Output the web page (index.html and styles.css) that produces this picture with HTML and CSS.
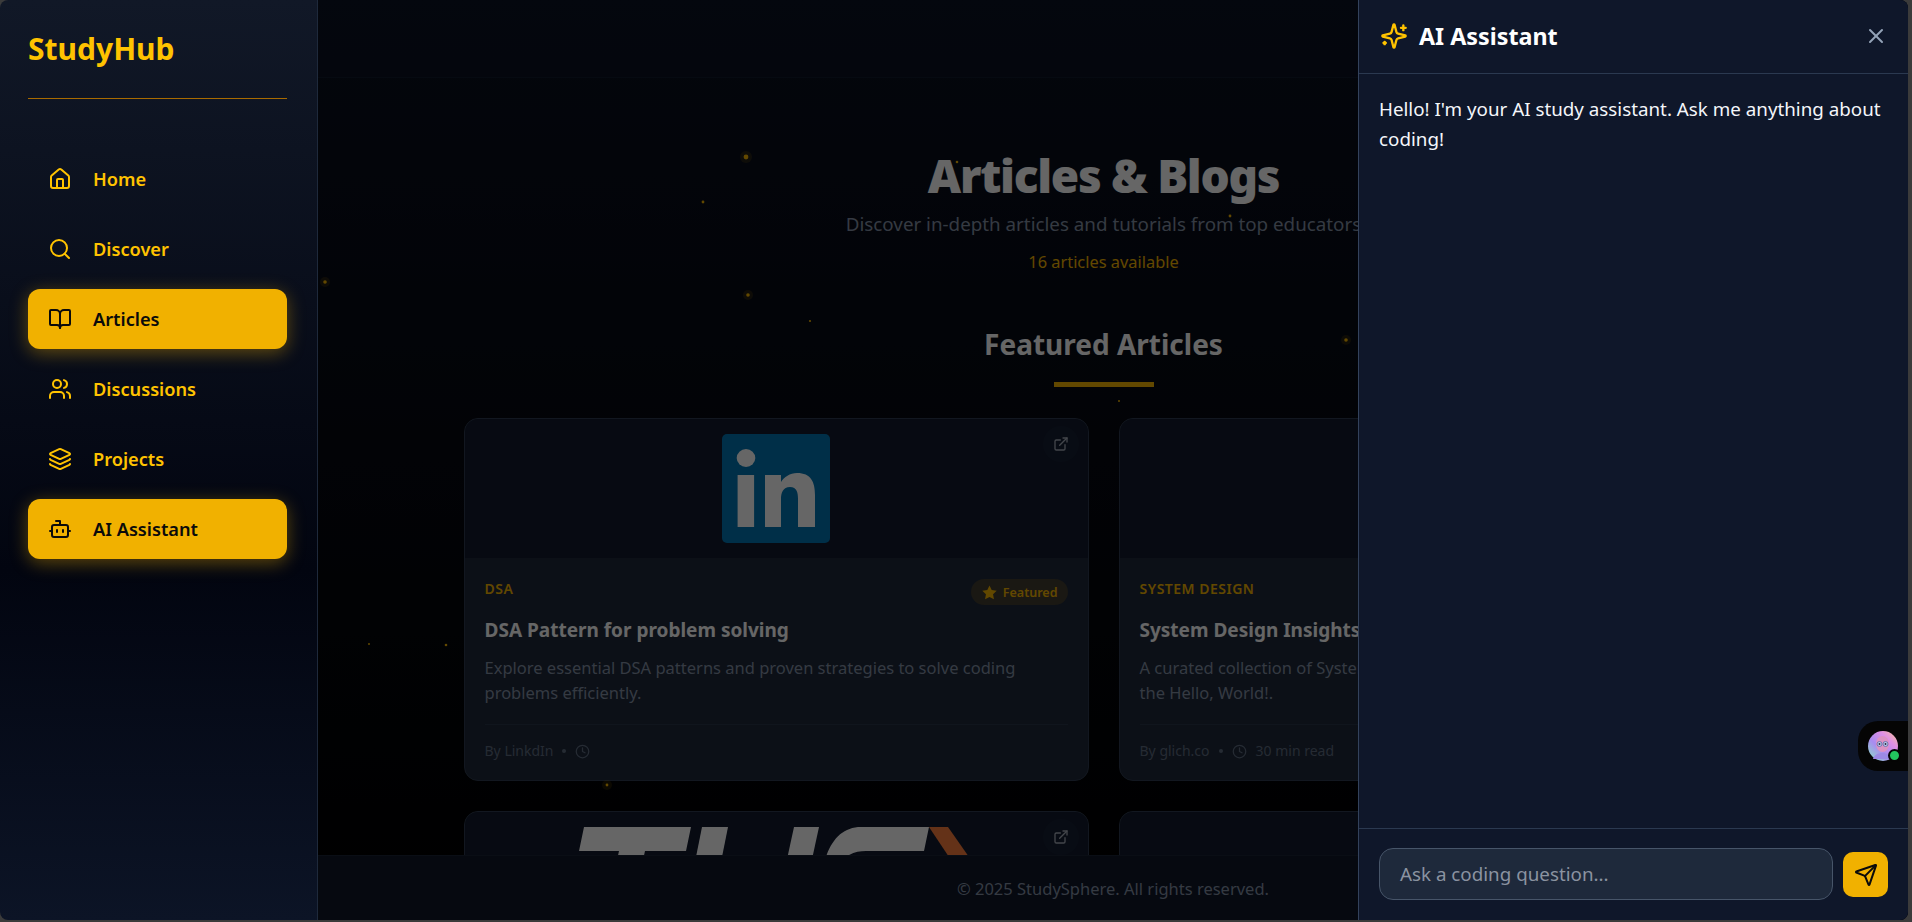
FILE: index.html
```html
<!DOCTYPE html>
<html lang="en">
<head>
<meta charset="utf-8">
<title>StudyHub - Articles</title>
<link rel="stylesheet" href="styles.css">
</head>
<body>
<div class="frame">
  <aside class="sidebar">
    <div class="brand">StudyHub</div>
    <nav class="nav">
      <a class="nav-item"><svg class="icon" viewBox="0 0 24 24"><path d="M15 21v-8a1 1 0 0 0-1-1h-4a1 1 0 0 0-1 1v8"/><path d="M3 10a2 2 0 0 1 .709-1.528l7-5.999a2 2 0 0 1 2.582 0l7 5.999A2 2 0 0 1 21 10v9a2 2 0 0 1-2 2H5a2 2 0 0 1-2-2z"/></svg><span>Home</span></a>
      <a class="nav-item"><svg class="icon" viewBox="0 0 24 24"><circle cx="11" cy="11" r="8"/><path d="m21 21-4.3-4.3"/></svg><span>Discover</span></a>
      <a class="nav-item active"><svg class="icon" viewBox="0 0 24 24"><path d="M12 7v14"/><path d="M3 18a1 1 0 0 1-1-1V4a1 1 0 0 1 1-1h5a4 4 0 0 1 4 4 4 4 0 0 1 4-4h5a1 1 0 0 1 1 1v13a1 1 0 0 1-1 1h-6a3 3 0 0 0-3 3 3 3 0 0 0-3-3z"/></svg><span>Articles</span></a>
      <a class="nav-item"><svg class="icon" viewBox="0 0 24 24"><path d="M16 21v-2a4 4 0 0 0-4-4H6a4 4 0 0 0-4 4v2"/><circle cx="9" cy="7" r="4"/><path d="M22 21v-2a4 4 0 0 0-3-3.87"/><path d="M16 3.13a4 4 0 0 1 0 7.75"/></svg><span>Discussions</span></a>
      <a class="nav-item"><svg class="icon" viewBox="0 0 24 24"><path d="M12.83 2.18a2 2 0 0 0-1.66 0L2.6 6.08a1 1 0 0 0 0 1.83l8.58 3.91a2 2 0 0 0 1.66 0l8.58-3.9a1 1 0 0 0 0-1.83z"/><path d="M2 12a1 1 0 0 0 .58.91l8.6 3.91a2 2 0 0 0 1.65 0l8.58-3.9A1 1 0 0 0 22 12"/><path d="M2 17a1 1 0 0 0 .58.91l8.6 3.91a2 2 0 0 0 1.65 0l8.58-3.9A1 1 0 0 0 22 17"/></svg><span>Projects</span></a>
      <a class="nav-item active"><svg class="icon" viewBox="0 0 24 24"><path d="M12 8V4H8"/><rect x="4" y="8" width="16" height="12" rx="2"/><path d="M2 14h2"/><path d="M20 14h2"/><path d="M15 13v2"/><path d="M9 13v2"/></svg><span>AI Assistant</span></a>
    </nav>
  </aside>

  <div class="main">
    <header class="topbar"></header>
    <main class="content">
      <svg class="particles" viewBox="0 0 1589 777" aria-hidden="true">
        <g class="glow">
          <circle cx="427" cy="79" r="6"/><circle cx="6" cy="204" r="5"/><circle cx="429" cy="217" r="5"/><circle cx="1027" cy="262" r="5"/><circle cx="288" cy="707" r="5"/>
        </g>
        <g class="dots">
          <circle cx="427" cy="79" r="2.4"/><circle cx="384" cy="124" r="1.4"/><circle cx="6" cy="204" r="1.8"/><circle cx="429" cy="217" r="1.8"/><circle cx="491" cy="243" r="1.1"/><circle cx="50" cy="566" r="1"/><circle cx="127" cy="567" r="1.3"/><circle cx="288" cy="707" r="1.4"/><circle cx="638" cy="84" r="1.3"/><circle cx="911" cy="138" r="1.4"/><circle cx="1027" cy="262" r="1.8"/><circle cx="800" cy="323" r="1"/>
        </g>
      </svg>
      <section class="hero">
        <h1 class="hero-title">Articles &amp; Blogs</h1>
        <p class="hero-sub">Discover in-depth articles and tutorials from top educators</p>
        <p class="hero-count">16 articles available</p>
      </section>
      <section class="featured">
        <h2 class="section-title">Featured Articles</h2>
        <div class="section-bar"></div>
        <div class="grid">
          <article class="card">
            <div class="card-media">
              <svg class="logo-in" viewBox="0 0 108 109"><rect width="108" height="109" rx="5" class="in-bg"/><ellipse cx="24" cy="24" rx="9.300" ry="9" class="in-fg"/><rect x="15.600" y="41" width="16.500" height="52" class="in-fg"/><path class="in-fg" d="M43 41h16v7c3-5 9-9 16-9 14 0 18 9 18 22v32H76V65c0-6-1-12-8-12s-9 6-9 12v28H43z"/></svg>
              <span class="ext"><svg class="icon-sm" viewBox="0 0 24 24"><path d="M15 3h6v6"/><path d="M10 14 21 3"/><path d="M18 13v6a2 2 0 0 1-2 2H5a2 2 0 0 1-2-2V8a2 2 0 0 1 2-2h6"/></svg></span>
            </div>
            <div class="card-body">
              <div class="card-top">
                <span class="cat">DSA</span>
                <span class="pill"><svg class="star" viewBox="0 0 24 24"><path d="M12 2l3.1 6.6 7.1.9-5.2 5 1.3 7.2L12 18.2l-6.3 3.5L7 14.5l-5.200-5 7.100-.9z"/></svg>Featured</span>
              </div>
              <h3 class="card-title">DSA Pattern for problem solving</h3>
              <p class="card-desc">Explore essential DSA patterns and proven strategies to solve coding problems efficiently.</p>
              <div class="card-meta"><span>By LinkdIn</span><span class="sep"></span><svg class="clock" viewBox="0 0 24 24"><circle cx="12" cy="12" r="10"/><polyline points="12 6 12 12 16 14"/></svg></div>
            </div>
          </article>
          <article class="card">
            <div class="card-media"></div>
            <div class="card-body">
              <div class="card-top"><span class="cat">System Design</span></div>
              <h3 class="card-title">System Design Insights</h3>
              <p class="card-desc">A curated collection of System Design articles, guides and newsletters from the Hello, World!.</p>
              <div class="card-meta"><span>By glich.co</span><span class="sep"></span><svg class="clock" viewBox="0 0 24 24"><circle cx="12" cy="12" r="10"/><polyline points="12 6 12 12 16 14"/></svg><span>30 min read</span></div>
            </div>
          </article>
          <article class="card">
            <div class="card-media">
              <svg class="logo-tuf" viewBox="0 0 430 60"><path class="tuf-fg" d="M23 0H130L125 24H84L76 60H50L58 24H18Z"/><path class="tuf-fg" d="M141 0H167L155 60H129Z"/><path class="tuf-fg" d="M233 0H258L245 60H220Z"/><path class="tuf-fg" d="M300 0H368L363 24H305C298 24 292 25 285 30L262 40C268 15 280 0 300 0Z"/><path class="tuf-or" d="M368 0H387L429 60H408Z"/></svg>
              <span class="ext"><svg class="icon-sm" viewBox="0 0 24 24"><path d="M15 3h6v6"/><path d="M10 14 21 3"/><path d="M18 13v6a2 2 0 0 1-2 2H5a2 2 0 0 1-2-2V8a2 2 0 0 1 2-2h6"/></svg></span>
            </div>
          </article>
          <article class="card">
            <div class="card-media"></div>
          </article>
        </div>
      </section>
    </main>
    <footer class="footer">© 2025 StudySphere. All rights reserved.</footer>
    <div class="dim"></div>
  </div>

  <aside class="panel">
    <div class="panel-head">
      <svg class="spark" viewBox="0 0 24 24"><path d="M9.937 15.5A2 2 0 0 0 8.5 14.063l-6.135-1.582a.5.5 0 0 1 0-.962L8.5 9.936A2 2 0 0 0 9.937 8.5l1.582-6.135a.5.5 0 0 1 .963 0L14.063 8.5A2 2 0 0 0 15.5 9.937l6.135 1.581a.5.5 0 0 1 0 .964L15.5 14.063a2 2 0 0 0-1.437 1.437l-1.582 6.135a.5.5 0 0 1-.963 0z"/><path d="M20 3v4"/><path d="M22 5h-4"/><path d="M4 17v2"/><path d="M5 18H3"/></svg>
      <h2 class="panel-title">AI Assistant</h2>
      <svg class="close" viewBox="0 0 24 24"><path d="M18 6 6 18"/><path d="m6 6 12 12"/></svg>
    </div>
    <div class="panel-body">
      <p class="msg">Hello! I'm your AI study assistant. Ask me anything about coding!</p>
    </div>
    <div class="panel-input">
      <div class="input">Ask a coding question...</div>
      <button class="send" type="button"><svg class="send-icon" viewBox="0 0 24 24"><path d="M14.536 21.686a.5.5 0 0 0 .937-.024l6.5-19a.496.496 0 0 0-.635-.635l-19 6.5a.5.5 0 0 0-.024.937l7.93 3.18a2 2 0 0 1 1.112 1.11z"/><path d="m21.854 2.147-10.94 10.939"/></svg></button>
    </div>
    <div class="widget">
      <span class="avatar">
        <svg viewBox="0 0 30 30"><defs><linearGradient id="av" x1="0" y1="1" x2="1" y2="0"><stop offset="0" stop-color="#86e6c4"/><stop offset=".4" stop-color="#a98cf0"/><stop offset=".7" stop-color="#e08fe6"/><stop offset="1" stop-color="#f9c68e"/></linearGradient></defs><circle cx="15" cy="15" r="15" fill="url(#av)"/><ellipse cx="14.500" cy="13" rx="6.500" ry="8" fill="#dc92c4"/><circle cx="11.500" cy="13" r="2.500" fill="#b9c4e8" stroke="#5f68a8" stroke-width=".8"/><circle cx="17.500" cy="13" r="2.500" fill="#b9c4e8" stroke="#5f68a8" stroke-width=".8"/><circle cx="11.500" cy="13" r=".9" fill="#2b2b3a"/><circle cx="17.500" cy="13" r=".9" fill="#2b2b3a"/><path d="M5 28c2-8 16-8 19 0z" fill="#9c8ae6"/></svg>
        <i class="online"></i>
      </span>
    </div>
  </aside>
</div>
</body>
</html>
```

FILE: styles.css
```css
* { box-sizing: border-box; }
html, body { margin: 0; height: 100%; }
body {
  background: #3b3b3b;
  font-family: "Noto Sans", "Open Sans", sans-serif;
  overflow: hidden;
}
h1, h2, h3, p { margin: 0; }

.frame {
  position: relative;
  width: 1908px;
  height: 920px;
  display: flex;
  border-radius: 8px;
  overflow: hidden;
}

/* Sidebar */
.sidebar {
  position: relative;
  z-index: 3;
  width: 318px;
  flex: none;
  padding: 28px 30px 0 28px;
  border-right: 1px solid #1e293b;
  background: linear-gradient(180deg, #111827 0%, #020510 62%, #0c1426 100%);
}
.brand {
  height: 71px;
  border-bottom: 1px solid #a86a00;
  color: #ffc300;
  font-size: 30px;
  font-weight: 700;
  line-height: 42px;
}
.nav {
  display: flex;
  flex-direction: column;
  gap: 10px;
  margin-top: 50px;
}
.nav-item {
  height: 60px;
  display: flex;
  align-items: center;
  gap: 21px;
  padding-left: 20px;
  border-radius: 12px;
  color: #ffc300;
  font-size: 18.2px;
  font-weight: 600;
}
.nav-item.active {
  background: #f1b100;
  color: #0b0b0b;
  box-shadow: 0 4px 18px rgba(241, 177, 0, .38);
}
.icon {
  width: 24px;
  height: 24px;
  fill: none;
  stroke: currentColor;
  stroke-width: 2;
  stroke-linecap: round;
  stroke-linejoin: round;
}

/* Main */
.main {
  position: relative;
  flex: 1;
  min-width: 0;
  display: flex;
  flex-direction: column;
  background: linear-gradient(180deg, #0a1020 0%, #000 100%);
}
.topbar {
  height: 78px;
  flex: none;
  background: rgba(15, 23, 42, .3);
  border-bottom: 1px solid #111a2c;
}
.content {
  position: relative;
  flex: 1;
  min-height: 0;
  overflow: hidden;
  padding: 0 19px 0 0;
}
.particles {
  position: absolute;
  left: 1px;
  top: 0;
  width: 1589px;
  height: 777px;
  z-index: 2;
  pointer-events: none;
}
.glow circle { fill: #f4b400; opacity: .12; }
.dots circle { fill: #f4b400; }
.hero { padding-top: 68px; text-align: center; }
.hero-title {
  color: #fff;
  font-size: 46px;
  font-weight: 900;
  letter-spacing: -1.3px;
  line-height: 58px;
}
.hero-sub {
  margin-top: 6px;
  color: #8491a6;
  font-size: 18.8px;
  line-height: 28px;
}
.hero-count {
  margin-top: 12px;
  color: #f4b400;
  font-size: 16.4px;
  line-height: 24px;
}
.featured { margin-top: 50px; }
.section-title {
  text-align: center;
  color: #fff;
  font-size: 28px;
  font-weight: 700;
  line-height: 40px;
}
.section-bar {
  width: 100px;
  height: 5px;
  margin: 18px auto 31px;
  background: #f4b400;
}
.grid {
  width: 1280px;
  margin: 0 auto;
  display: grid;
  grid-template-columns: 625px 625px;
  gap: 30px;
}
.card {
  height: 363px;
  display: flex;
  flex-direction: column;
  border: 1px solid #2f3b50;
  border-radius: 14px;
  background: #1e293b;
  overflow: hidden;
}
.card-media {
  position: relative;
  height: 140px;
  flex: none;
  display: flex;
  justify-content: center;
  padding-top: 15px;
  background: #121b2e;
  border-bottom: 1px solid #1e293b;
}
.logo-in { width: 108px; height: 109px; }
.in-bg { fill: #0077b5; }
.in-fg { fill: #fff; }
.logo-tuf { width: 430px; height: 60px; }
.tuf-fg { fill: #fff; }
.tuf-or { fill: #f97d3c; }
.ext {
  position: absolute;
  right: 9px;
  top: 7px;
  width: 36px;
  height: 36px;
  display: flex;
  align-items: center;
  justify-content: center;
  border-radius: 50%;
  background: #161f33;
  color: #a8afbb;
}
.icon-sm {
  width: 16px;
  height: 16px;
  fill: none;
  stroke: currentColor;
  stroke-width: 2;
  stroke-linecap: round;
  stroke-linejoin: round;
}
.card-body {
  flex: 1;
  padding: 20px;
  display: flex;
  flex-direction: column;
}
.card-top {
  height: 26px;
  display: flex;
  justify-content: space-between;
  align-items: flex-start;
}
.cat {
  color: #f4b400;
  font-size: 14px;
  font-weight: 600;
  letter-spacing: .5px;
  line-height: 20px;
  text-transform: uppercase;
}
.pill {
  height: 26px;
  display: flex;
  align-items: center;
  gap: 5px;
  padding: 0 10px;
  border-radius: 13px;
  background: #413c30;
  color: #f4b400;
  font-size: 12.5px;
  font-weight: 600;
}
.star { width: 17px; height: 17px; fill: #f4b400; }
.card-title {
  margin-top: 11px;
  color: #fff;
  font-size: 19px;
  font-weight: 700;
  line-height: 28px;
}
.card-desc {
  margin-top: 11px;
  color: #8491a6;
  font-size: 16.5px;
  line-height: 25px;
  height: 50px;
}
.card-meta {
  margin-top: 19px;
  padding-top: 16px;
  border-top: 1px solid #2a3549;
  display: flex;
  align-items: center;
  gap: 9px;
  color: #5f6c80;
  font-size: 14px;
  line-height: 20px;
}
.sep { width: 4px; height: 4px; border-radius: 50%; background: currentColor; }
.clock {
  width: 15px;
  height: 15px;
  fill: none;
  stroke: currentColor;
  stroke-width: 2;
  stroke-linecap: round;
  stroke-linejoin: round;
}
.footer {
  position: relative;
  z-index: 1;
  height: 65px;
  flex: none;
  display: flex;
  align-items: center;
  justify-content: center;
  border-top: 1px solid #1a2336;
  background: #0f172a;
  color: #8491a6;
  font-size: 16.5px;
}
.dim {
  position: absolute;
  inset: 0;
  z-index: 2;
  background: rgba(0, 0, 0, .6);
}

/* AI panel */
.panel {
  position: absolute;
  right: 0;
  top: 0;
  bottom: 0;
  z-index: 4;
  width: 550px;
  display: flex;
  flex-direction: column;
  border-left: 1px solid #33425c;
  background: #0f172a;
}
.panel-head {
  height: 74px;
  flex: none;
  display: flex;
  align-items: center;
  padding: 0 20px 2px 21px;
  border-bottom: 1px solid #2b3950;
}
.spark {
  width: 28px;
  height: 28px;
  margin-right: 11px;
  fill: none;
  stroke: #ffc300;
  stroke-width: 2;
  stroke-linecap: round;
  stroke-linejoin: round;
}
.panel-title {
  flex: 1;
  color: #fff;
  font-size: 23.3px;
  font-weight: 700;
  line-height: 30px;
}
.close {
  width: 24px;
  height: 24px;
  fill: none;
  stroke: #94a3b8;
  stroke-width: 2;
  stroke-linecap: round;
  stroke-linejoin: round;
}
.panel-body {
  flex: 1;
  padding: 20px;
}
.msg {
  color: #f4f6fa;
  font-size: 18.8px;
  line-height: 30px;
}
.panel-input {
  height: 92px;
  flex: none;
  display: flex;
  align-items: center;
  gap: 10px;
  padding: 0 20px;
  border-top: 1px solid #2b3950;
}
.input {
  flex: 1;
  height: 52px;
  margin-bottom: 2px;
  display: flex;
  align-items: center;
  padding-left: 20px;
  border: 1px solid #475569;
  border-radius: 14px;
  background: #1e293b;
  color: #8b93a1;
  font-size: 18.8px;
}
.send {
  width: 45px;
  height: 45px;
  flex: none;
  display: flex;
  align-items: center;
  justify-content: center;
  padding: 0;
  border: 0;
  border-radius: 10px;
  background: #f1b100;
}
.send-icon {
  width: 24px;
  height: 24px;
  fill: none;
  stroke: #0b0b0b;
  stroke-width: 2;
  stroke-linecap: round;
  stroke-linejoin: round;
}
.widget {
  position: absolute;
  right: 0;
  top: 721px;
  width: 50px;
  height: 50px;
  display: flex;
  align-items: center;
  padding-left: 10px;
  border-radius: 20px 0 0 20px;
  background: #050505;
}
.avatar { position: relative; width: 30px; height: 30px; display: block; }
.avatar svg { display: block; width: 30px; height: 30px; }
.online {
  position: absolute;
  right: -3px;
  bottom: -1px;
  width: 13px;
  height: 13px;
  border: 2px solid #050505;
  border-radius: 50%;
  background: #22c55e;
}
```
